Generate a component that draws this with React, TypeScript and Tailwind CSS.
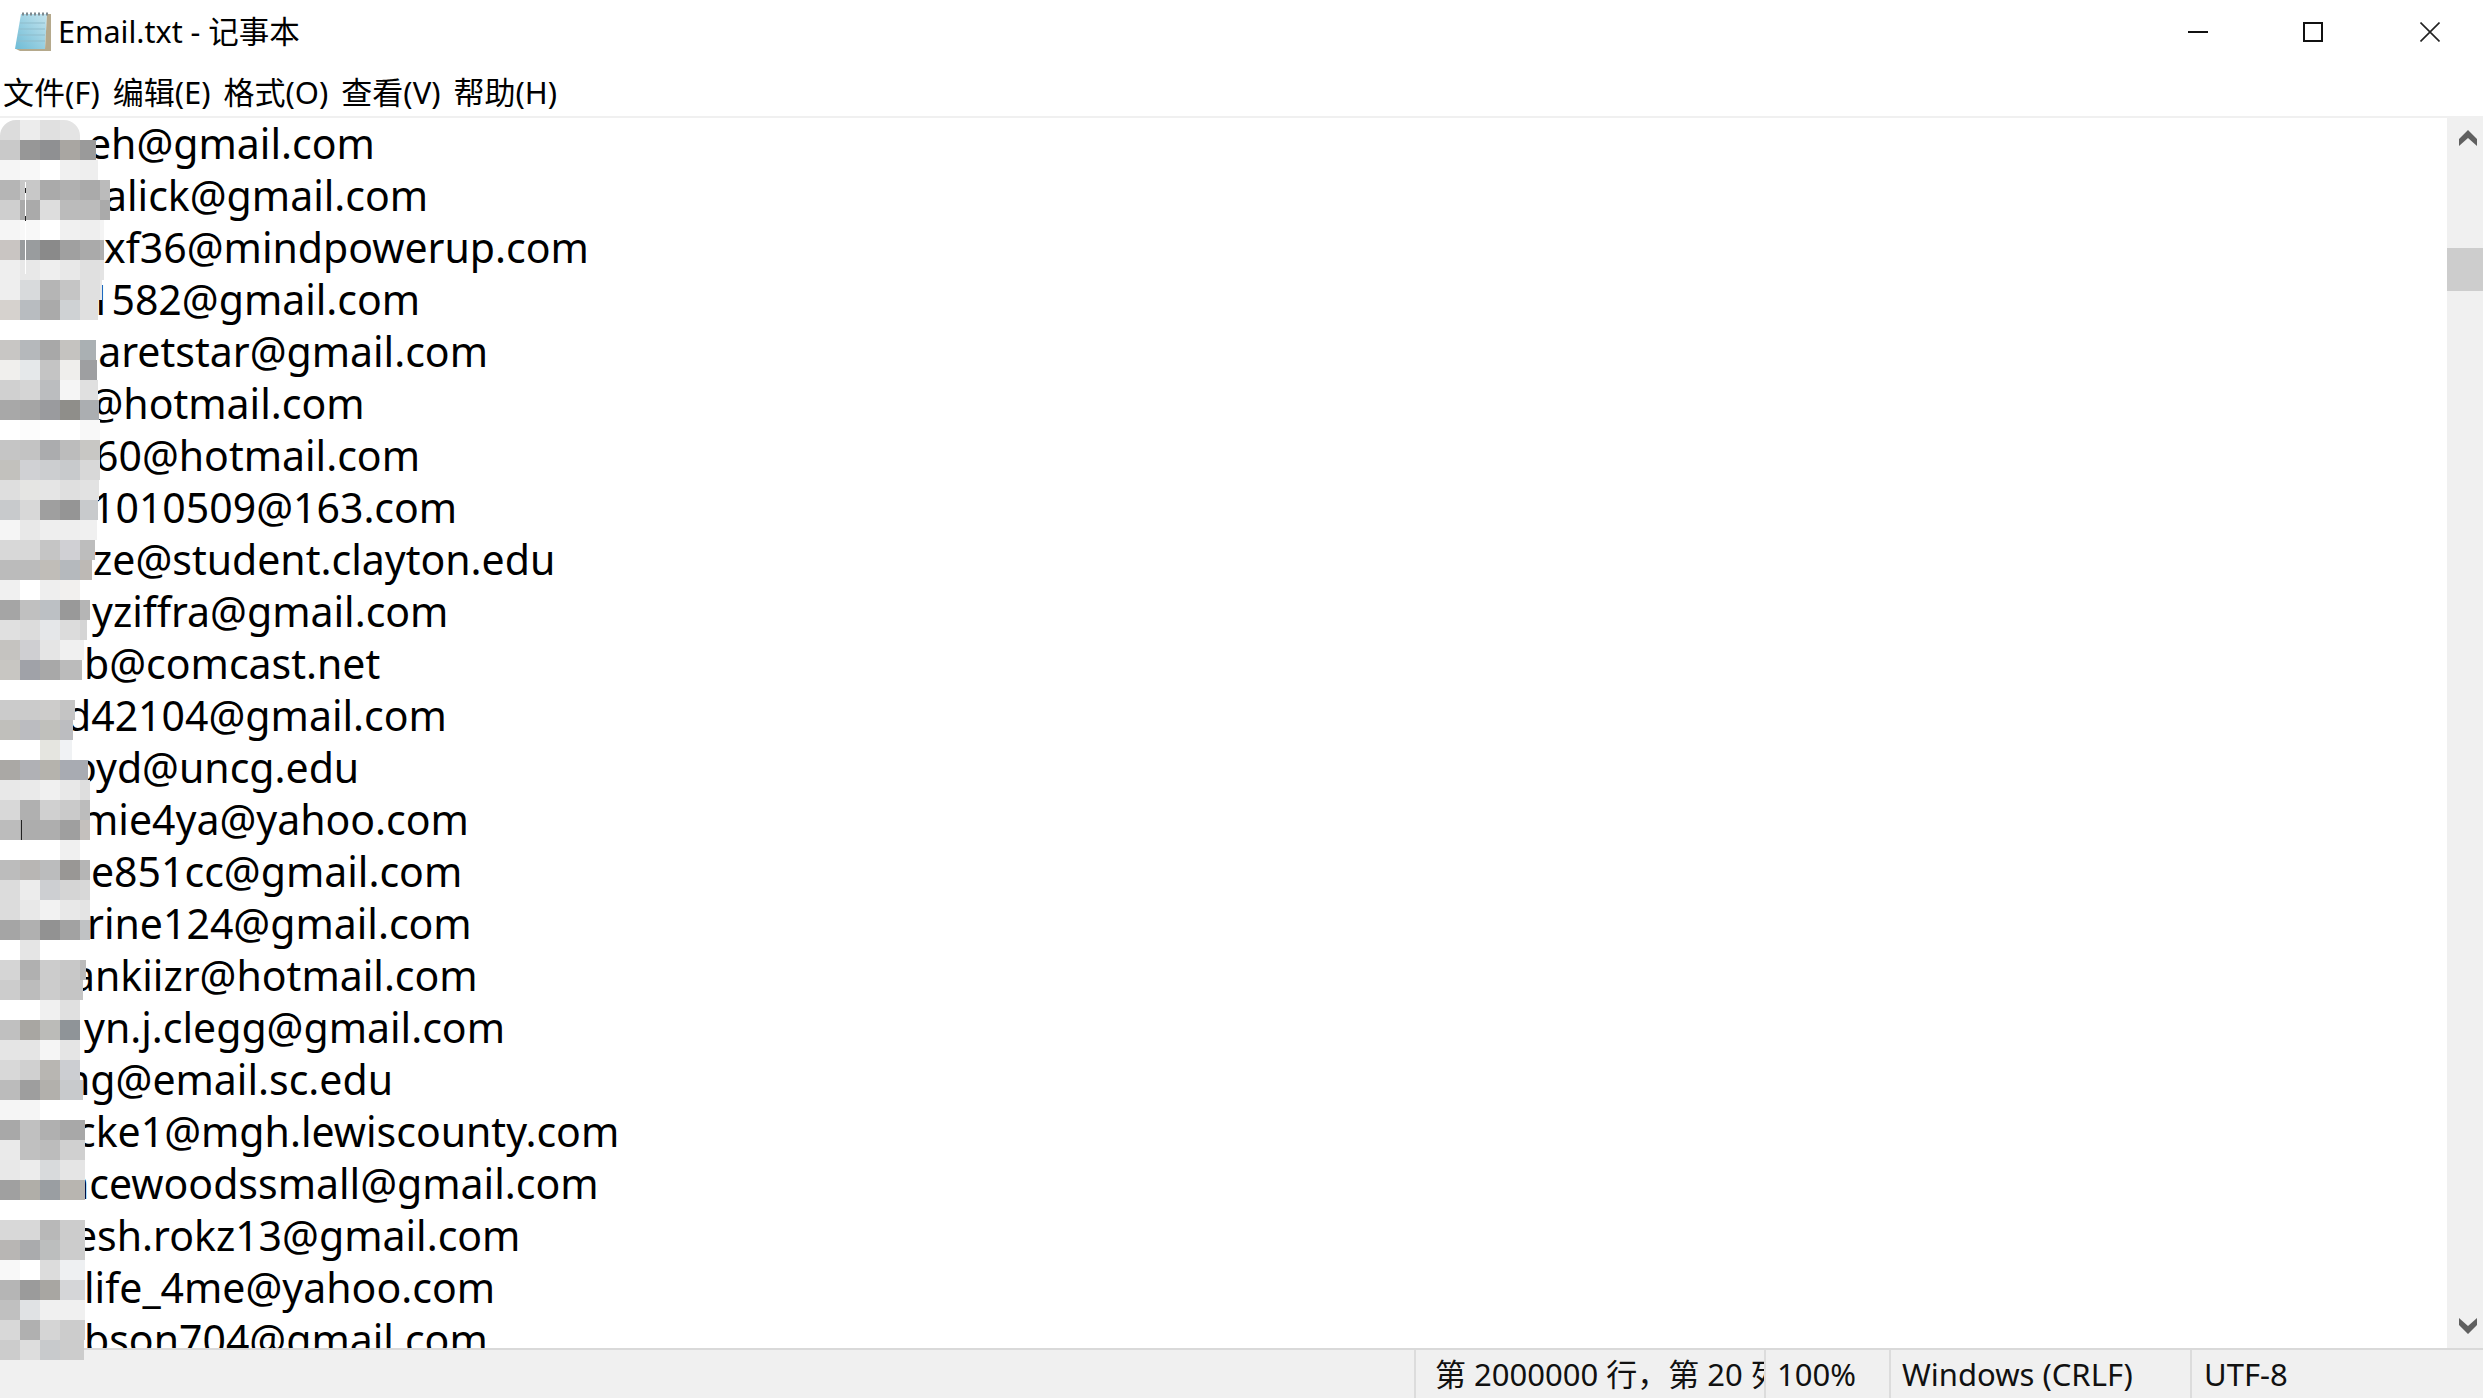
const uiFont = { fontFamily: '"Noto Sans", "Noto Sans CJK SC", sans-serif' };

// visible part of each line; the start of every address sits under the mosaic
const lines = [
  { text: "eh@gmail.com", pl: "pl-[88px]" },
  { text: "alick@gmail.com", pl: "pl-[104px]" },
  { text: "xf36@mindpowerup.com", pl: "pl-[104px]" },
  { text: "1582@gmail.com", pl: "pl-[88px]" },
  { text: "garetstar@gmail.com", pl: "pl-[73px]" },
  { text: "0@hotmail.com", pl: "pl-[63px]" },
  { text: "60@hotmail.com", pl: "pl-[95px]" },
  { text: "1010509@163.com", pl: "pl-[92px]" },
  { text: "ze@student.clayton.edu", pl: "pl-[93px]" },
  { text: "yziffra@gmail.com", pl: "pl-[92px]" },
  { text: "b@comcast.net", pl: "pl-[84px]" },
  { text: "d42104@gmail.com", pl: "pl-[66px]" },
  { text: "oyd@uncg.edu", pl: "pl-[72px]" },
  { text: "mie4ya@yahoo.com", pl: "pl-[80px]" },
  { text: "e851cc@gmail.com", pl: "pl-[91px]" },
  { text: "rine124@gmail.com", pl: "pl-[87px]" },
  { text: "ankiizr@hotmail.com", pl: "pl-[72px]" },
  { text: "yn.j.clegg@gmail.com", pl: "pl-[84px]" },
  { text: "ng@email.sc.edu", pl: "pl-[65px]" },
  { text: "cke1@mgh.lewiscounty.com", pl: "pl-[76px]" },
  { text: "ncewoodssmall@gmail.com", pl: "pl-[64px]" },
  { text: "esh.rokz13@gmail.com", pl: "pl-[74px]" },
  { text: "life_4me@yahoo.com", pl: "pl-[84px]" },
  { text: "bson704@gmail.com", pl: "pl-[84px]" },
];

const mosaic: [number, string[]][] = [
  [80, ["#dcdcdc", "#ececec", "#e0e0e0", "#e4e4e4", "#ffffff"]],
  [96, ["#c9c9c9", "#979797", "#8f9092", "#a9a6a2", "#9a9a9a"]],
  [98, ["#f5f5f5", "#f8f8f8", "#ffffff", "#f0f0f0", "#eeeeee"]],
  [110, ["#b5b5b5", "#c8c8c8", "#aaaaaa", "#b0b0b0", "#aaaaaa", "#bbbbbb"]],
  [110, ["#cfcfcf", "#aaaaaa", "#dddddd", "#bbbbbb", "#bbbbbb", "#aaaaaa"]],
  [104, ["#f5f5f5", "#f8f8f8", "#ffffff", "#f0f0f0", "#eeeeee", "#f4f4f4"]],
  [104, ["#c9c5c2", "#999c9e", "#8a8a8a", "#a0a0a0", "#aaaaaa", "#b0b0b0"]],
  [104, ["#eeeeee", "#e8e8e8", "#eeeeee", "#e8e8e8", "#e0e0e0", "#e4e4e4"]],
  [102, ["#eeeeee", "#d8dadc", "#b5b5b5", "#c5c5c5", "#e0e0e0", "#e8e8e8"]],
  [98, ["#d6d2ce", "#b8bcc0", "#aaaaaa", "#cfd2d4", "#e0e0e0"]],
  [96, ["#ffffff", "#ffffff", "#ffffff", "#ffffff", "#ffffff"]],
  [96, ["#c8c6c4", "#b5b8bb", "#a8a8a8", "#c5c3c0", "#aab0b3"]],
  [97, ["#f0efed", "#e5e8ea", "#c4c4c4", "#efeeec", "#9e9fa1"]],
  [98, ["#d0d0d0", "#d5d5d5", "#bbbdbf", "#f5f5f5", "#e0e0e0"]],
  [99, ["#a8a8a8", "#a5a5a5", "#9a9b9e", "#8f8e8a", "#abaeb1"]],
  [100, ["#ffffff", "#fcfcfc", "#ffffff", "#ffffff", "#f8f8f8"]],
  [100, ["#c5c5c5", "#c3c3c3", "#abacae", "#bcbcbc", "#c8c7c4"]],
  [100, ["#c2c1bd", "#d0d1d4", "#ccced0", "#c8cacc", "#d8d8d8"]],
  [99, ["#dedede", "#e5e5e3", "#e5e5e5", "#dfdfdf", "#e2e2e2"]],
  [98, ["#c8cacc", "#d8d8d8", "#9f9f9f", "#959595", "#c8cacc"]],
  [97, ["#f5f5f5", "#e8e8e8", "#eeeeee", "#eeeeee", "#f0f0f0"]],
  [95, ["#d8d8d8", "#d8d8d8", "#c5c5c5", "#d0d0d4", "#bdbdbd"]],
  [92, ["#bbbbbb", "#bbbbbb", "#c0bdb8", "#b5b9bd", "#bdb9b5"]],
  [90, ["#f0f0f0", "#ffffff", "#eeeeee", "#f2f0ee", "#ffffff"]],
  [90, ["#a5a5a5", "#c0c0c0", "#bcc0c4", "#999999", "#b5b5b5"]],
  [87, ["#e0e0e0", "#dcdcdc", "#e5e7e9", "#dcdcdc", "#d5d5d5"]],
  [84, ["#c5c3c0", "#cfcfd2", "#e5e5e5", "#f0f0f0", "#f0f0f0"]],
  [82, ["#c8c6c2", "#a0a2a8", "#a8a8a8", "#bbbbbb", "#bbbbbb"]],
  [80, ["#ffffff", "#ffffff", "#ffffff", "#ffffff"]],
  [75, ["#cbcbcb", "#cbcbcb", "#cdcccb", "#c4c4c4"]],
  [73, ["#c0bfbb", "#bbbcc0", "#c0c0bc", "#bcbdc0"]],
  [72, ["#ffffff", "#ffffff", "#e5e5e0", "#f0f2f4"]],
  [88, ["#aaa8a5", "#b0b1b5", "#b5b3ad", "#a8abb2", "#a8abb2"]],
  [90, ["#e8e8e8", "#eaeaea", "#f0f0f0", "#e8e8e8", "#dedede"]],
  [90, ["#d8d8d8", "#b0b0b0", "#d0d0d0", "#cacaca", "#bcbcbc"]],
  [90, ["#bcbcbc", "#adadad", "#aeaeae", "#9f9f9f", "#c4c0bd"]],
  [90, ["#ffffff", "#ffffff", "#ffffff", "#f0f0f0", "#ffffff"]],
  [90, ["#bcbcbc", "#b8b6b4", "#bbbcbd", "#999795", "#b5b5b5"]],
  [90, ["#dcdcdc", "#ececec", "#cdcfd2", "#d5d5d5", "#d8d8d8"]],
  [90, ["#dcdcdc", "#e8e8e8", "#f2f2f2", "#e8e8e8", "#e4e4e4"]],
  [90, ["#a5a5a5", "#b0b0b0", "#929292", "#a2a2a2", "#c0c2c4"]],
  [80, ["#ffffff", "#e5e5e5", "#ffffff", "#ffffff"]],
  [86, ["#d5d5d5", "#b0b0b0", "#cccccc", "#c8c8c8", "#bbbbbb"]],
  [83, ["#cccccc", "#bcbcbc", "#cccccc", "#c5c5c5", "#c5c5c5"]],
  [80, ["#ffffff", "#ffffff", "#f0f0f0", "#e0e0e0"]],
  [80, ["#c0c0c0", "#a8a6a2", "#bbbbb8", "#8f9498"]],
  [80, ["#e5e5e5", "#e5e5e5", "#f5f5f5", "#e5e5e5"]],
  [80, ["#d8d8d8", "#d0d0d0", "#b8b6b2", "#ccced2"]],
  [83, ["#bbbbbb", "#9e9e9e", "#b2b0ac", "#c8cacc", "#c8cacc"]],
  [83, ["#f5f5f5", "#f5f5f5", "#ffffff", "#ffffff", "#ffffff"]],
  [85, ["#a8a8a8", "#c0c0c0", "#b0b0b0", "#a8a8a8", "#a8a8a8"]],
  [85, ["#eaeaea", "#c0c0c0", "#bcbcbc", "#d0d0d0", "#d0d0d0"]],
  [85, ["#e8e8e8", "#ececec", "#d8dadc", "#e5e5e5", "#e5e5e5"]],
  [85, ["#a0a0a0", "#b0aea8", "#9a9ea2", "#b8b5b0", "#b8b5b0"]],
  [85, ["#ffffff", "#ffffff", "#ffffff", "#ffffff", "#ffffff"]],
  [85, ["#d8d8d8", "#d8d8d8", "#b8b8b8", "#cccccc", "#cccccc"]],
  [85, ["#b8b6b4", "#aaabad", "#bcbebe", "#cccccc", "#cccccc"]],
  [85, ["#f8f8f8", "#ffffff", "#dcdcdc", "#eef0f2", "#eef0f2"]],
  [85, ["#b5b5b5", "#9b9b9b", "#a8a6a2", "#d5d6d8", "#d5d6d8"]],
  [85, ["#c0c0c0", "#e0e2e4", "#f0f0f0", "#f0f0f0", "#f0f0f0"]],
  [85, ["#d8d8d8", "#b0b0b0", "#d5d5d5", "#cccccc", "#cccccc"]],
  [84, ["#cccccc", "#dddddd", "#c8cacc", "#cccccc", "#cccccc"]],
];

function NotepadIcon() {
  return (
    <svg width="40" height="42" viewBox="0 0 40 42">
      <defs>
        <linearGradient id="page" x1="0" y1="1" x2="1" y2="0">
          <stop offset="0" stopColor="#6fbcd6" />
          <stop offset="1" stopColor="#c4e4ee" />
        </linearGradient>
      </defs>
      <path d="M9 3 L35 3 L33 38 L3 38 Z" fill="url(#page)" />
      <path d="M35 3 L39 3 L39 40 L8 40 L4 38 L33 38 Z" fill="#b5a98c" />
      <g stroke="#8fbccb" strokeWidth="1">
        <line x1="8" y1="12" x2="33" y2="12" />
        <line x1="7" y1="18" x2="33" y2="18" />
        <line x1="6" y1="24" x2="33" y2="24" />
        <line x1="5" y1="30" x2="33" y2="30" />
      </g>
      <path d="M10 3 L36 3" stroke="#7d8a90" strokeWidth="3" strokeDasharray="2 2" />
    </svg>
  );
}

function Mosaic() {
  return (
    <div className="absolute left-0 top-[120px] flex flex-col">
      {mosaic.map(([width, cells], i) => (
        <div
          key={i}
          className={`flex h-5 overflow-hidden ${i === 0 ? "rounded-t-2xl" : ""}`}
          style={{ width }}
        >
          {cells.map((color, j) => (
            <div key={j} className="h-5 w-5 shrink-0" style={{ backgroundColor: color }} />
          ))}
        </div>
      ))}
      {/* leftovers of the cursor line that the blur missed */}
      <div className="absolute left-[25px] top-[62px] h-[92px] w-px bg-white" />
      <div className="absolute left-[25px] top-[68px] h-[5px] w-px bg-[#222]" />
      <div className="absolute left-[25px] top-[96px] h-[5px] w-px bg-[#222]" />
      <div className="absolute left-[21px] top-[700px] h-5 w-px bg-[#222]" />
    </div>
  );
}

function Scrollbar() {
  return (
    <div className="flex w-9 shrink-0 flex-col justify-between bg-[#f0f0f0]">
      <div>
        <div className="flex h-[130px] items-start justify-center pl-[6px] pt-[11px]">
          <svg width="20" height="18" viewBox="0 0 20 18">
            <path d="M10 1 L19 10 L19 17 L10 9 L1 17 L1 10 Z" fill="#606060" />
          </svg>
        </div>
        <div className="h-[43px] bg-[#cdcdcd]" />
      </div>
      <div className="flex h-10 items-start justify-center pl-[6px] pt-[9px]">
        <svg width="20" height="18" viewBox="0 0 20 18">
          <path d="M10 17 L19 8 L19 1 L10 9 L1 1 L1 8 Z" fill="#606060" />
        </svg>
      </div>
    </div>
  );
}

export default function App() {
  return (
    <div className="relative flex h-[1398px] w-[2483px] flex-col overflow-hidden bg-white text-black" style={uiFont}>
      {/* Title bar */}
      <div className="flex h-[72px] shrink-0 items-start">
        <div className="ml-[12px] mt-[11px]">
          <NotepadIcon />
        </div>
        <span className="ml-[6px] mt-[11px] text-[30.5px] leading-[40px]">Email.txt - 记事本</span>
        <div className="ml-auto flex h-[64px] items-center pr-[43px]">
          <svg width="20" height="20" viewBox="0 0 20 20" className="mr-[95px]">
            <rect x="0" y="9" width="20" height="2" fill="#111" />
          </svg>
          <svg width="20" height="20" viewBox="0 0 20 20" className="mr-[97px]">
            <rect x="1" y="1" width="18" height="18" fill="none" stroke="#111" strokeWidth="2" />
          </svg>
          <svg width="20" height="20" viewBox="0 0 20 20">
            <path d="M0.5 0.5 L19.5 19.5 M19.5 0.5 L0.5 19.5" stroke="#222" strokeWidth="1.6" />
          </svg>
        </div>
      </div>

      {/* Menu */}
      <div className="flex h-[44px] shrink-0 items-start gap-[13px] pl-[3px] text-[31px] leading-[40px]">
        <span>文件(F)</span>
        <span>编辑(E)</span>
        <span>格式(O)</span>
        <span>查看(V)</span>
        <span>帮助(H)</span>
      </div>

      {/* Editor */}
      <div className="flex min-h-0 flex-1 border-t-2 border-[#f0f0f0]">
        <div className="min-w-0 flex-1 overflow-hidden text-[41px] leading-[51px]">
          {lines.map((line) => (
            <div key={line.text} className={`h-[52px] whitespace-nowrap ${line.pl}`}>
              {line.text}
            </div>
          ))}
        </div>
        <Scrollbar />
      </div>

      {/* Status bar */}
      <div className="flex h-[50px] shrink-0 items-center border-t-2 border-[#d9d9d9] bg-[#f0f0f0] text-[31px] leading-[40px] text-[#111]">
        <div className="w-[1414px] shrink-0" />
        <div className="flex h-full w-[350px] shrink-0 items-center overflow-hidden whitespace-nowrap border-l-2 border-[#dcdcdc] pl-[19px]">
          第 2000000 行，第 20 列
        </div>
        <div className="flex h-full w-[125px] shrink-0 items-center border-l-2 border-[#dcdcdc] pl-[11px]">100%</div>
        <div className="flex h-full w-[301px] shrink-0 items-center border-l-2 border-[#dcdcdc] pl-[11px]">Windows (CRLF)</div>
        <div className="flex h-full items-center border-l-2 border-[#dcdcdc] pl-[12px]">UTF-8</div>
      </div>

      <Mosaic />
    </div>
  );
}
